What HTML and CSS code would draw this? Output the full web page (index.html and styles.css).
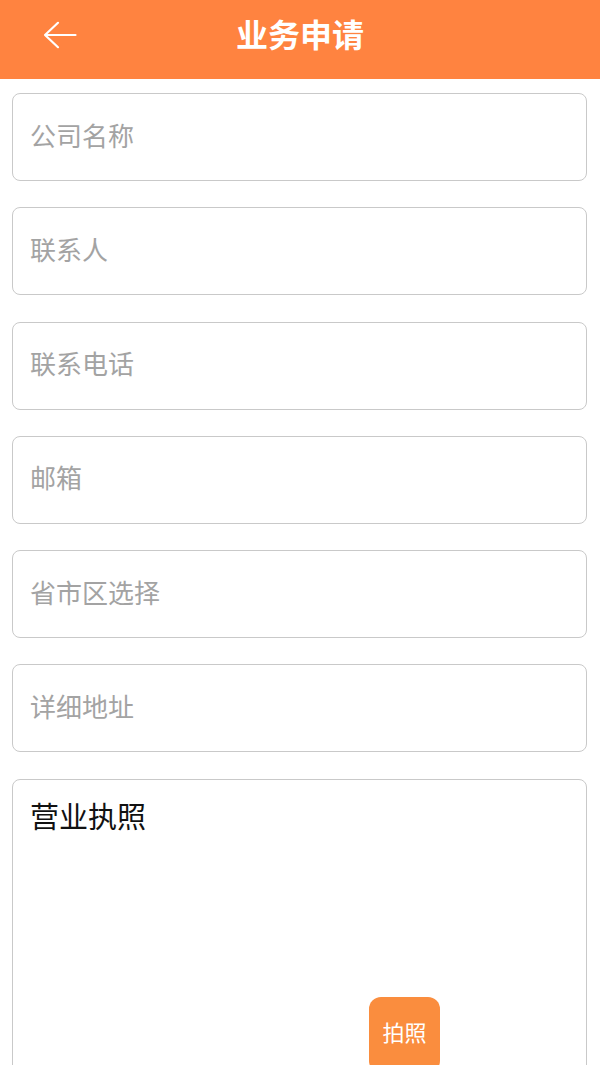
FILE: index.html
```html
<!DOCTYPE html>
<html lang="zh-CN">
<head>
    <meta charset="UTF-8">
    <meta name="viewport" content="width=device-width, initial-scale=1.0">
    <title>业务申请</title>
    <link rel="stylesheet" href="styles.css">
</head>
<body>
    <header class="top-bar">
        <button class="back-btn" aria-label="返回">
            <svg width="34" height="28" viewBox="0 0 34 28">
                <path d="M32.5 14 H2 M15 1.8 L2 14 L15 26.2" fill="none" stroke="#fff" stroke-width="2.2" stroke-linecap="round" stroke-linejoin="round"/>
            </svg>
        </button>
        <h1>业务申请</h1>
    </header>
    <form class="apply-form">
        <input class="field" type="text" placeholder="公司名称">
        <input class="field" type="text" placeholder="联系人">
        <input class="field" type="tel" placeholder="联系电话">
        <input class="field" type="email" placeholder="邮箱">
        <input class="field" type="text" placeholder="省市区选择">
        <input class="field" type="text" placeholder="详细地址">
        <div class="license-box">
            <p class="license-title">营业执照</p>
            <button type="button" class="photo-btn">拍照</button>
        </div>
    </form>
</body>
</html>
```

FILE: styles.css
```css
body {
    margin: 0;
    padding: 0;
    background: #fff;
    font-family: "Noto Sans CJK SC", "Noto Sans", sans-serif;
    overflow: hidden;
}

.top-bar {
    box-sizing: border-box;
    height: 79px;
    padding-bottom: 13px;
    background-color: #ff8340;
    display: flex;
    align-items: center;
    justify-content: center;
    position: relative;
}

.top-bar h1 {
    margin: 0;
    color: #fff;
    font-size: 32px;
    font-weight: bold;
    line-height: 1;
}

.back-btn {
    position: absolute;
    left: 43px;
    top: 21px;
    background: none;
    border: none;
    padding: 0;
    cursor: pointer;
}

.back-btn svg {
    display: block;
}

.apply-form {
    display: flex;
    flex-direction: column;
    gap: 26.3px;
    padding: 14px 13px 0 12px;
}

.field {
    box-sizing: border-box;
    height: 88px;
    width: 100%;
    border: 1.5px solid #c9c9c9;
    border-radius: 8px;
    padding: 0 17px 6px;
    font-family: inherit;
    font-size: 26px;
    color: #333;
    outline: none;
}

.field::placeholder {
    color: #a3a3a3;
}

.license-box {
    box-sizing: border-box;
    height: 320px;
    border: 1.5px solid #c9c9c9;
    border-radius: 8px;
    padding: 14px 17px;
}

.license-title {
    margin: 0;
    font-size: 29px;
    color: #111;
}

.photo-btn {
    display: block;
    margin: 161px 0 0 339px;
    width: 71px;
    height: 76px;
    border: none;
    border-radius: 12px;
    background-color: #fa8d3e;
    color: #fff;
    font-family: inherit;
    font-size: 22px;
    padding: 0 0 8px;
}
```
